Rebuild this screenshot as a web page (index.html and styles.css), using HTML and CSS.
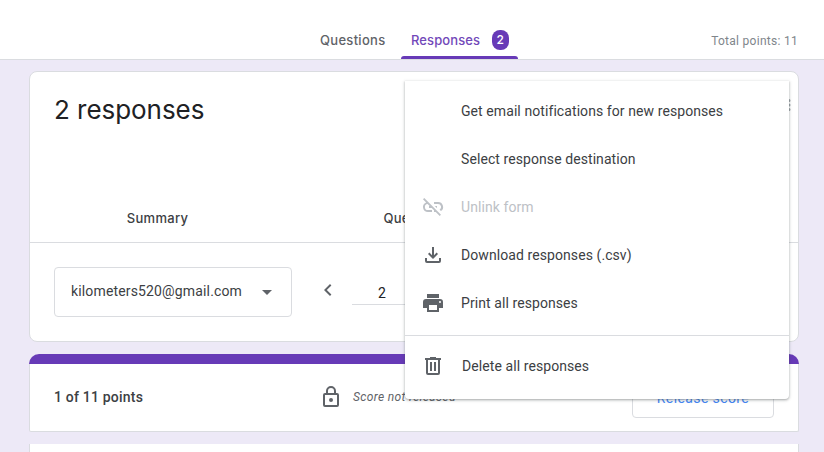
FILE: index.html
```html
<!DOCTYPE html>
<html lang="en">
<head>
<meta charset="utf-8">
<title>Responses</title>
<link rel="stylesheet" href="styles.css">
</head>
<body>
<header class="topbar">
  <nav class="tabs">
    <div class="tab">Questions</div>
    <div class="tab tab-active">Responses <span class="badge">2</span></div>
  </nav>
  <div class="total">Total points: 11</div>
</header>
<main class="page">
  <section class="card summary">
    <div class="summary-head">
      <h1 class="count">2 responses</h1>
      <svg class="more" viewBox="0 0 24 24"><path d="M12 8a2 2 0 1 0 0-4 2 2 0 0 0 0 4zm0 2a2 2 0 1 0 0 4 2 2 0 0 0 0-4zm0 6a2 2 0 1 0 0 4 2 2 0 0 0 0-4z"/></svg>
    </div>
    <div class="subtabs">
      <div class="subtab">Summary</div>
      <div class="subtab">Question</div>
      <div class="subtab">Individual</div>
    </div>
    <div class="pager">
      <div class="select">
        <span>kilometers520@gmail.com</span>
        <span class="caret"></span>
      </div>
      <svg class="chev" viewBox="0 0 24 24"><path d="M15.4 7.4 14 6l-6 6 6 6 1.4-1.4L10.8 12z"/></svg>
      <div class="pageinput">2</div>
    </div>
  </section>
  <section class="card score">
    <div class="points">1 of 11 points</div>
    <div class="lockwrap">
      <svg class="lock" viewBox="0 0 24 24"><path d="M18 8h-1V6a5 5 0 0 0-10 0v2H6a2 2 0 0 0-2 2v10a2 2 0 0 0 2 2h12a2 2 0 0 0 2-2V10a2 2 0 0 0-2-2zM9 6a3 3 0 0 1 6 0v2H9V6zm9 14H6V10h12v10zm-6-3a2 2 0 1 0 0-4 2 2 0 0 0 0 4z"/></svg>
      <span class="notreleased">Score not released</span>
    </div>
    <div class="release">Release score</div>
  </section>
  <section class="card next"></section>
</main>
<div class="menu">
  <div class="item"><span class="ico"></span><span>Get email notifications for new responses</span></div>
  <div class="item"><span class="ico"></span><span>Select response destination</span></div>
  <div class="item item-off">
    <svg class="ico" viewBox="0 0 24 24"><path d="M17 7h-4v1.9h4a3.1 3.1 0 0 1 1.6 5.76l1.4 1.41A5 5 0 0 0 17 7zm-1 4h-2.19l2 2H16v-2zM2 4.27l3.11 3.11A5 5 0 0 0 7 17h4v-1.9H7a3.1 3.1 0 0 1-.44-6.17l2.07 2.07H8v2h2.73L13 15.27V17h1.73l4.01 4L20 19.74 3.27 3 2 4.27z"/></svg>
    <span>Unlink form</span>
  </div>
  <div class="item">
    <svg class="ico" viewBox="0 0 24 24"><path d="M18 15v3H6v-3H4v3a2 2 0 0 0 2 2h12a2 2 0 0 0 2-2v-3h-2zm-1-4-1.41-1.41L13 12.17V4h-2v8.17L8.41 9.59 7 11l5 5 5-5z"/></svg>
    <span>Download responses (.csv)</span>
  </div>
  <div class="item">
    <svg class="ico" viewBox="0 0 24 24"><path d="M19 8H5a3 3 0 0 0-3 3v6h4v4h12v-4h4v-6a3 3 0 0 0-3-3zm-3 11H8v-5h8v5zm3-7a1 1 0 1 1 0-2 1 1 0 0 1 0 2zm-1-9H6v4h12V3z"/></svg>
    <span>Print all responses</span>
  </div>
  <div class="divider"></div>
  <div class="item item-del">
    <svg class="ico" viewBox="0 0 24 24"><path d="M15 4V3H9v1H4v2h1v13a2 2 0 0 0 2 2h10a2 2 0 0 0 2-2V6h1V4h-5zm2 15H7V6h10v13zM9 8h2v9H9V8zm4 0h2v9h-2V8z"/></svg>
    <span>Delete all responses</span>
  </div>
</div>
</body>
</html>
```
FILE: styles.css
```css
* { box-sizing: border-box; }
html, body { margin: 0; height: 452px; overflow: hidden; }
body { background: #ede9f7; font-family: Roboto, "Liberation Sans", sans-serif; color: #202124; position: relative; }

.topbar { height: 60px; background: #fff; border-bottom: 1px solid #dadce0; display: flex; justify-content: center; position: relative; }
.tabs { display: flex; margin-left: 14px; }
.tab { height: 59px; padding-top: 30px; font-family: Inter, Roboto, sans-serif; font-size: 13px; font-weight: 500; letter-spacing: .3px; color: #5f6368; line-height: 20px; white-space: nowrap; position: relative; }
.tabs .tab:first-child { width: 81px; }
.tabs .tab-active { color: #7248b9; width: 117px; padding-left: 10px; letter-spacing: .1px; }
.tab-active::after { content: ""; position: absolute; left: 0; right: 0; bottom: 0; height: 3px; background: #673ab7; border-radius: 3px 3px 0 0; }
.badge { display: inline-block; width: 17px; height: 20px; margin-left: 8px; border-radius: 8px; background: #673ab7; color: #fff; font-size: 12px; text-align: center; vertical-align: top; line-height: 20px; }
.total { position: absolute; right: 26px; top: 33px; font-size: 12px; line-height: 16px; color: #80868b; letter-spacing: .28px; }

.page { padding: 11px 25px 0 29px; display: flex; flex-direction: column; gap: 12px; }
.card { background: #fff; border: 1px solid #dadce0; border-radius: 8px; }

.summary { height: 271px; display: flex; flex-direction: column; }
.summary-head { height: 123px; display: flex; justify-content: space-between; padding: 22px 0 0 24px; }
.count { margin: 0; font-family: Inter, Roboto, sans-serif; font-size: 26px; font-weight: 400; line-height: 32px; letter-spacing: -.05px; }
.more { width: 18px; height: 18px; fill: #9aa0a6; margin-top: 2px; }
.subtabs { height: 48px; display: grid; grid-template-columns: 255px 255px 1fr; border-bottom: 1px solid #dadce0; }
.subtab { font-family: Inter, Roboto, sans-serif; font-size: 13px; font-weight: 500; letter-spacing: .3px; color: #3c4043; text-align: center; line-height: 46px; }
.pager { display: flex; align-items: flex-start; padding: 24px 0 0 24px; }
.select { width: 238px; height: 50px; border: 1px solid #dadce0; border-radius: 4px; padding: 0 19px 2px 16px; display: flex; align-items: center; justify-content: space-between; font-size: 14px; letter-spacing: .15px; color: #3c4043; }
.caret { width: 0; height: 0; border-left: 5px solid transparent; border-right: 5px solid transparent; border-top: 5px solid #5f6368; margin-top: 3px; }
.chev { width: 24px; height: 24px; fill: #5f6368; margin: 11px 0 0 24px; }
.pageinput { width: 60px; height: 27px; margin: 11px 0 0 12px; border-bottom: 1px solid #dadce0; font-size: 14px; line-height: 30px; text-align: center; color: #202124; }

.score { height: 78px; display: flex; align-items: center; padding: 10px 24px 0; position: relative; border-top: 0; border-radius: 10px 10px 2px 2px; }
.score::before { content: ""; position: absolute; left: -1px; right: -1px; top: 0; height: 10px; background: #673ab7; border-radius: 10px 10px 0 0; }
.points { font-size: 14px; font-weight: 500; letter-spacing: .2px; width: 265px; color: #3c4043; margin-top: -2px; }
.lockwrap { display: flex; align-items: center; gap: 10px; margin-top: -2px; }
.lock { width: 24px; height: 24px; fill: #5f6368; }
.notreleased { font-size: 12px; font-style: italic; color: #5f6368; letter-spacing: .35px; }
.release { margin-left: auto; width: 142px; height: 36px; margin-top: 4px; border: 1px solid #dadce0; border-radius: 4px; color: #4285f4; font-size: 14px; letter-spacing: .4px; text-align: center; line-height: 30px; }
.next { height: 40px; border-radius: 0; border-top: 0; }

.menu { position: absolute; left: 405px; top: 81px; width: 384px; height: 318px; background: #fff; border-radius: 0 0 4px 4px; padding-top: 6px; box-shadow: 0 1px 2px rgba(60,64,67,.3), 0 1px 3px 1px rgba(60,64,67,.15); }
.item { height: 48px; display: flex; align-items: center; gap: 16px; padding-left: 16px; font-size: 14px; letter-spacing: .08px; color: #3c4043; }
.ico { width: 24px; height: 24px; flex: none; fill: #5f6368; display: block; }
.item-off { color: #bdc1c6; }
.item-off .ico { fill: #bdc1c6; }
.divider { height: 1px; background: #dadce0; margin: 8px 0 6px; }
.item-del { gap: 17px; }
```
